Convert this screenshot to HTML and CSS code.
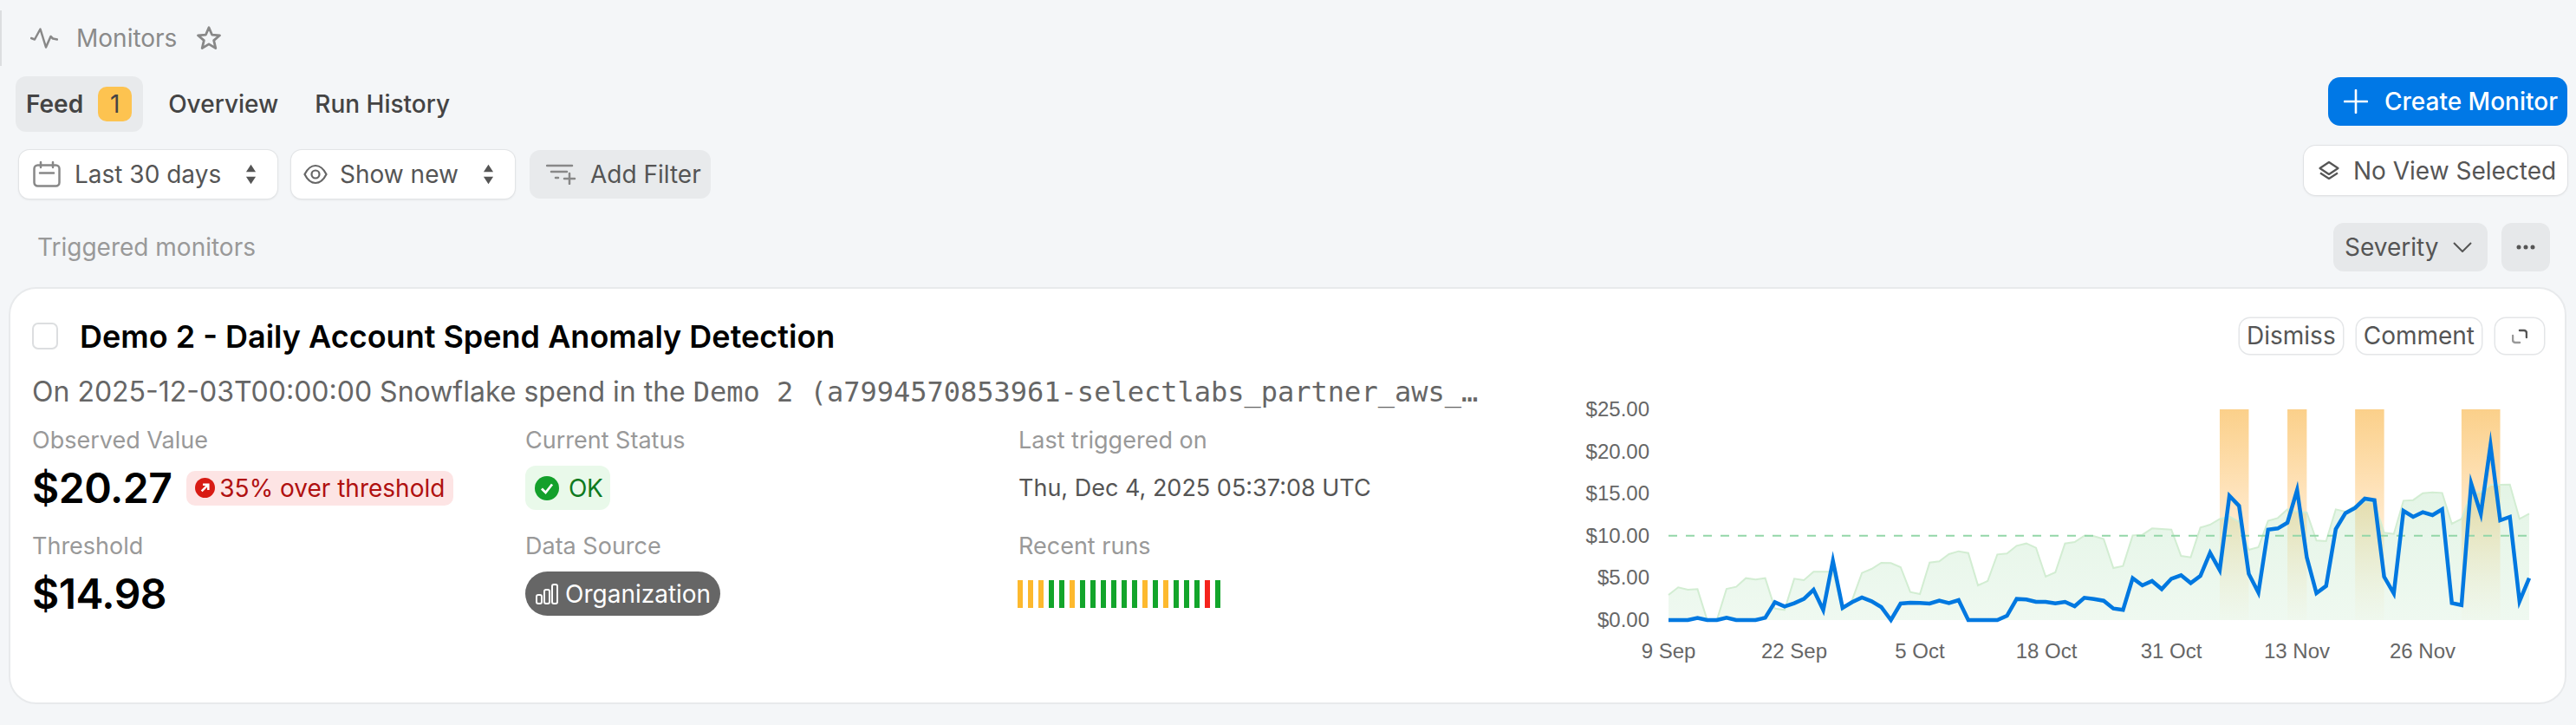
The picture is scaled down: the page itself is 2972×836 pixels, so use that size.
FILE: index.html
```html
<!DOCTYPE html>
<html lang="en">
<head>
<meta charset="utf-8">
<title>Monitors</title>
<link rel="stylesheet" href="styles.css">
</head>
<body>
<header class="page-head">
  <svg class="ic-activity" viewBox="0 0 32 24"><path d="M1 12 5 13.500 11.500 1.500 18 22.500 23.500 10 26 12.500 31 13.500"/></svg>
  <span class="page-title">Monitors</span>
  <svg class="ic-star" viewBox="0 0 28 28"><path d="M14 2.500 17.300 10.300 25.700 11 19.300 16.500 21.300 24.800 14 20.400 6.700 24.800 8.700 16.500 2.300 11 10.700 10.300Z"/></svg>
</header>

<section class="toolbar">
  <div class="toolbar-left">
    <nav class="tabs">
      <a class="tab tab-active"><span>Feed</span><span class="tab-badge">1</span></a>
      <a class="tab">Overview</a>
      <a class="tab">Run History</a>
    </nav>
    <div class="filters">
      <button class="select select-date">
        <svg class="ic-calendar" viewBox="0 0 32 30"><rect x="1.500" y="4.500" width="29" height="24" rx="4"/><path d="M9 1v6M23 1v6M8 13.500h16" /></svg>
        <span>Last 30 days</span>
        <svg class="ic-updown" viewBox="0 0 14 24"><path d="M7 0 13 9H1ZM7 24 1 15H13Z"/></svg>
      </button>
      <button class="select select-show">
        <svg class="ic-eye" viewBox="0 0 28 24"><path d="M1.500 12C5 5 9 2 14 2s9 3 12.500 10C23 19 19 22 14 22S5 19 1.500 12Z"/><circle cx="14" cy="12" r="4.500"/></svg>
        <span>Show new</span>
        <svg class="ic-updown" viewBox="0 0 14 24"><path d="M7 0 13 9H1ZM7 24 1 15H13Z"/></svg>
      </button>
      <button class="ghost-filter">
        <svg class="ic-filter" viewBox="0 0 36 24"><path d="M1 2h29M6 9h18M11 16h3M27 11v12M21 17h12"/></svg>
        <span>Add Filter</span>
      </button>
    </div>
  </div>
  <div class="toolbar-right">
    <button class="primary">
      <svg class="ic-plus" viewBox="0 0 28 28"><path d="M14 1v26M1 14h26"/></svg>
      <span>Create Monitor</span>
    </button>
    <button class="view-btn">
      <svg class="ic-layers" viewBox="0 0 24 24"><path d="M12 2 22.500 9 12 16 1.500 9ZM2 14.500 12 21 22 14.500"/></svg>
      <span>No View Selected</span>
    </button>
  </div>
</section>

<section class="list-head">
  <span class="list-title">Triggered monitors</span>
  <div class="list-actions">
    <button class="sort-btn"><span>Severity</span>
      <svg class="ic-chevron" viewBox="0 0 22 12"><path d="M1 1 11 11 21 1"/></svg>
    </button>
    <button class="more-btn"><svg class="ic-dots" viewBox="0 0 22 6"><circle cx="3" cy="3" r="2.500"/><circle cx="11" cy="3" r="2.500"/><circle cx="19" cy="3" r="2.500"/></svg></button>
  </div>
</section>

<article class="card">
  <div class="card-head">
    <span class="checkbox"></span>
    <h2 class="card-title">Demo 2 - Daily Account Spend Anomaly Detection</h2>
    <div class="card-actions">
      <button class="mini">Dismiss</button>
      <button class="mini">Comment</button>
      <button class="mini mini-icon"><svg class="ic-expand" viewBox="0 0 18 18"><path class="dark" d="M9 2h5a3 3 0 0 1 3 3v5"/><path class="light" d="M9 16H4a3 3 0 0 1-3-3V8"/></svg></button>
    </div>
  </div>
  <div class="card-body">
    <div class="details">
      <p class="desc">On 2025-12-03T00:00:00 Snowflake spend in the <code class="mono">Demo 2 (a7994570853961-selectlabs_partner_aws_…</code></p>
      <div class="facts">
        <div class="fact">
          <div class="label">Observed Value</div>
          <div class="value-row">
            <span class="big">$20.27</span>
            <span class="over">
              <svg class="ic-over" viewBox="0 0 24 24"><circle cx="12" cy="12" r="12"/><path d="M8 16 16 8M9.500 8H16V14.500"/></svg>
              35% over threshold
            </span>
          </div>
        </div>
        <div class="fact">
          <div class="label">Current Status</div>
          <div class="value-row">
            <span class="ok">
              <svg class="ic-ok" viewBox="0 0 28 28"><circle cx="14" cy="14" r="14"/><path d="M8 14.500 12.500 19 20 9.500"/></svg>
              OK
            </span>
          </div>
        </div>
        <div class="fact">
          <div class="label">Last triggered on</div>
          <div class="value-row"><span class="date">Thu, Dec 4, 2025 05:37:08 UTC</span></div>
        </div>
        <div class="fact">
          <div class="label">Threshold</div>
          <div class="value-row"><span class="big">$14.98</span></div>
        </div>
        <div class="fact">
          <div class="label">Data Source</div>
          <div class="value-row">
            <span class="org">
              <svg class="ic-org" viewBox="0 0 26 24"><rect x="1" y="13" width="6" height="10" rx="2"/><rect x="10" y="7" width="6" height="16" rx="2"/><rect x="19" y="1" width="6" height="22" rx="2"/></svg>
              Organization
            </span>
          </div>
        </div>
        <div class="fact">
          <div class="label">Recent runs</div>
          <div class="value-row runs">
            <i class="run warn"></i><i class="run warn"></i><i class="run warn"></i><i class="run good"></i><i class="run good"></i><i class="run warn"></i><i class="run good"></i><i class="run good"></i><i class="run good"></i><i class="run good"></i><i class="run good"></i><i class="run good"></i><i class="run warn"></i><i class="run good"></i><i class="run warn"></i><i class="run good"></i><i class="run good"></i><i class="run good"></i><i class="run bad"></i><i class="run good"></i>
          </div>
        </div>
      </div>
    </div>
    <svg class="chart" viewBox="0 0 1130 320" width="1130" height="320">
      <defs>
        <linearGradient id="bandFill" x1="0" y1="0" x2="0" y2="1">
          <stop offset="0" stop-color="#fbd08a"/>
          <stop offset="0.5" stop-color="#ffe8c8"/>
          <stop offset="1" stop-color="#fff4e2" stop-opacity="0.1"/>
        </linearGradient>
        <linearGradient id="areaFill" x1="0" y1="0" x2="0" y2="1">
          <stop offset="0" stop-color="#1aa82e" stop-opacity="0.12"/>
          <stop offset="1" stop-color="#1aa82e" stop-opacity="0.07"/>
        </linearGradient>
      </defs>
      <g class="axis-y">
        <text x="83" y="30">$25.00</text>
        <text x="83" y="79">$20.00</text>
        <text x="83" y="127">$15.00</text>
        <text x="83" y="176">$10.00</text>
        <text x="83" y="224">$5.00</text>
        <text x="83" y="273">$0.00</text>
      </g>
      <g class="axis-x">
        <text x="105" y="309">9 Sep</text>
        <text x="250" y="309">22 Sep</text>
        <text x="395" y="309">5 Oct</text>
        <text x="541" y="309">18 Oct</text>
        <text x="685" y="309">31 Oct</text>
        <text x="830" y="309">13 Nov</text>
        <text x="975" y="309">26 Nov</text>
      </g>
      <svg x="105" y="22" width="993" height="243" viewBox="0 0 89 729" preserveAspectRatio="none" class="plot">
        <rect class="band" x="57" y="0" width="3" height="729"/>
        <rect class="band" x="64" y="0" width="2" height="729"/>
        <rect class="band" x="71" y="0" width="3" height="729"/>
        <rect class="band" x="82" y="0" width="4" height="729"/>
        <polygon class="area" points="0,642 1,616 2,624 3,622 4,729 5,729 6,621 7,614 8,584 9,589 10,584 11,689 12,694 13,586 14,591 15,562 16,562 17,562 18,694 19,659 20,566 21,552 22,531 23,532 24,546 25,632 26,639 27,530 28,526 29,501 30,491 31,497 32,609 33,594 34,502 35,499 36,472 37,464 38,479 39,579 40,564 41,464 42,459 43,437 44,439 45,449 46,549 47,542 48,436 49,434 50,412 51,414 52,416 53,507 54,512 55,409 56,399 57,379 58,371 59,389 60,486 61,477 62,386 63,376 64,346 65,354 66,357 67,454 68,456 69,346 70,354 71,334 72,319 73,322 74,427 75,431 76,316 77,314 78,290 79,287 80,289 81,396 82,379 83,289 84,286 85,261 86,261 87,260 88,379 89,361 89,729 0,729"/>
        <polyline class="area-line" points="0,642 1,616 2,624 3,622 4,729 5,729 6,621 7,614 8,584 9,589 10,584 11,689 12,694 13,586 14,591 15,562 16,562 17,562 18,694 19,659 20,566 21,552 22,531 23,532 24,546 25,632 26,639 27,530 28,526 29,501 30,491 31,497 32,609 33,594 34,502 35,499 36,472 37,464 38,479 39,579 40,564 41,464 42,459 43,437 44,439 45,449 46,549 47,542 48,436 49,434 50,412 51,414 52,416 53,507 54,512 55,409 56,399 57,379 58,371 59,389 60,486 61,477 62,386 63,376 64,346 65,354 66,357 67,454 68,456 69,346 70,354 71,334 72,319 73,322 74,427 75,431 76,316 77,314 78,290 79,287 80,289 81,396 82,379 83,289 84,286 85,261 86,261 87,260 88,379 89,361"/>
        <line class="threshold" x1="0" y1="437" x2="89" y2="437"/>
        <polyline class="spend" points="0,729 1,729 2,729 3,722 4,729 5,729 6,721 7,729 8,729 9,729 10,721 11,667 12,682 13,671 14,656 15,624 16,694 17,524 18,687 19,667 20,651 21,664 22,684 23,729 24,672 25,669 26,670 27,672 28,662 29,670 30,660 31,729 32,729 33,729 34,729 35,714 36,656 37,658 38,666 39,666 40,671 41,666 42,681 43,652 44,656 45,662 46,689 47,694 48,584 49,609 50,594 51,622 52,586 53,574 54,601 55,576 56,496 57,556 58,299 59,334 60,569 61,634 62,416 63,412 64,392 65,279 66,512 67,636 68,611 69,414 70,359 71,341 72,309 73,314 74,579 75,637 76,351 77,372 78,356 79,366 80,346 81,670 82,677 83,256 84,362 85,124 86,384 87,372 88,664 89,584"/>
      </svg>
    </svg>
  </div>
</article>
</body>
</html>
```

FILE: styles.css
```css
* { box-sizing: border-box; }
html, body { margin: 0; padding: 0; }
body {
  width: 2972px;
  height: 836px;
  overflow: hidden;
  background: #f4f6f8;
  font-family: Inter, "Liberation Sans", sans-serif;
  font-size: 28px;
  color: #555;
}
button {
  font: inherit;
  color: inherit;
  border: 0;
  background: none;
  padding: 0;
  margin: 0;
}
svg { display: block; flex: none; }

/* page header */
.page-head {
  margin-top: 12px;
  height: 64px;
  border-left: 2px solid #dcdee0;
  display: flex;
  align-items: center;
  padding-left: 33px;
  margin-bottom: 12px;
  color: #8a8a8a;
}
.ic-activity { width: 32px; height: 24px; fill: none; stroke: #888; stroke-width: 2.5; stroke-linejoin: round; stroke-linecap: round; }
.page-title { margin-left: 21px; }
.ic-star { width: 30px; height: 30px; margin-left: 22px; fill: none; stroke: #888; stroke-width: 2.6; stroke-linejoin: round; }

/* toolbar */
.toolbar {
  display: flex;
  justify-content: space-between;
  padding: 0 10px 0 18px;
}
.tabs { display: flex; gap: 16px; height: 64px; }
.tab {
  display: flex;
  align-items: center;
  padding: 0 13px;
  border-radius: 12px;
  color: #444;
  font-weight: 500;
  white-space: pre;
}
.tab-active { background: #e8eaec; padding: 0 13px 0 12px; font-weight: 600; gap: 17px; }
.tab-badge {
  width: 39px;
  height: 40px;
  display: flex;
  align-items: center;
  justify-content: center;
  background: #fdc350;
  border-radius: 10px;
  font-weight: 400;
}
.filters { display: flex; margin: 21px 0 0 4px; gap: 16px; }
.select {
  display: flex;
  align-items: center;
  height: 56px;
  background: #fff;
  border-radius: 12px;
  box-shadow: 0 0 0 1px #e2e4e6, 0 1px 3px rgba(0,0,0,.12);
}
.select-date { width: 298px; padding: 0 24px 0 16px; gap: 16px; }
.select-show { width: 258px; padding: 0 24px 0 14px; gap: 14px; }
.select span { flex: 1; text-align: left; }
.ic-calendar { width: 32px; height: 30px; fill: none; stroke: #888; stroke-width: 2.5; stroke-linecap: round; }
.ic-updown { width: 13px; height: 24px; fill: #555; }
.ic-eye { width: 28px; height: 24px; fill: none; stroke: #666; stroke-width: 2.2; }
.ghost-filter {
  display: flex;
  align-items: center;
  gap: 15px;
  height: 56px;
  width: 209px;
  margin-left: 1px;
  padding-left: 19px;
  background: #e8eaec;
  border-radius: 12px;
}
.ic-filter { width: 36px; height: 24px; fill: none; stroke: #888; stroke-width: 2.5; stroke-linecap: round; }

.toolbar-right { display: flex; flex-direction: column; align-items: flex-end; padding-top: 1px; gap: 23px; }
.primary {
  display: flex;
  align-items: center;
  gap: 19px;
  height: 56px;
  width: 276px;
  padding-left: 18px;
  background: #0078e6;
  color: #fff;
  border-radius: 14px;
  font-weight: 500;
}
.ic-plus { width: 28px; height: 28px; fill: none; stroke: #fff; stroke-width: 2.6; stroke-linecap: round; }
.view-btn {
  display: flex;
  align-items: center;
  gap: 16px;
  height: 57px;
  width: 304px;
  padding-left: 17px;
  background: #fff;
  border-radius: 14px;
  box-shadow: 0 0 0 1px #e0e2e4, 0 1px 3px rgba(0,0,0,.1);
  white-space: nowrap;
}
.ic-layers { width: 24px; height: 24px; fill: none; stroke: #555; stroke-width: 2.2; stroke-linejoin: round; }

/* list header */
.list-head {
  display: flex;
  justify-content: space-between;
  align-items: center;
  margin-top: 28px;
  padding: 0 30px 0 43px;
  height: 56px;
}
.list-title { color: #999; }
.list-actions { display: flex; gap: 16px; }
.sort-btn {
  display: flex;
  align-items: center;
  justify-content: space-between;
  width: 178px;
  height: 56px;
  padding: 0 18px 0 13px;
  background: #e6e8ea;
  border-radius: 12px;
}
.ic-chevron { width: 22px; height: 12px; fill: none; stroke: #555; stroke-width: 2; }
.more-btn {
  display: flex;
  align-items: center;
  justify-content: center;
  width: 56px;
  height: 56px;
  background: #e6e8ea;
  border-radius: 12px;
}
.ic-dots { width: 22px; height: 6px; fill: #555; }

/* card */
.card {
  margin: 18px 11px 0 10px;
  height: 481px;
  background: #fff;
  border: 2px solid #e8eaec;
  border-radius: 32px;
  padding: 34px 24px 0 25px;
}
.card-head { display: flex; align-items: center; height: 41px; margin-bottom: 24px; }
.checkbox {
  width: 30px;
  height: 31px;
  border: 2px solid #dcdee0;
  border-radius: 7px;
  margin-right: 25px;
  background: #fff;
}
.card-title { margin: 0; flex: 1; font-size: 36px; font-weight: 600; color: #000; }
.card-actions { display: flex; gap: 16px; }
.mini {
  height: 41px;
  padding: 0 8px;
  background: #fff;
  border-radius: 12px;
  box-shadow: 0 0 0 1.500px #e4e6e8, 0 1px 2px rgba(0,0,0,.06);
  font-size: 28px;
  line-height: 41px;
  color: #555;
}
.mini-icon { width: 56px; display: flex; align-items: center; justify-content: center; }
.ic-expand { width: 18px; height: 18px; fill: none; stroke-width: 2.5; stroke-linecap: round; }
.ic-expand .dark { stroke: #555; }
.ic-expand .light { stroke: #999; }

.card-body { display: flex; }
.details { width: 1708px; flex: none; }
.desc {
  margin: 0 0 19px;
  height: 40px;
  line-height: 40px;
  font-size: 32px;
  color: #666;
  white-space: nowrap;
}
.mono { font-family: "DejaVu Sans Mono", "Liberation Mono", monospace; font-size: 32px; letter-spacing: 0; }
.facts { display: grid; grid-template-columns: repeat(3, 569px); row-gap: 25px; }
.label { height: 34px; line-height: 34px; font-size: 27px; color: #999; margin-bottom: 12px; }
.value-row { height: 51px; display: flex; align-items: center; }
.big { font-size: 48px; font-weight: 600; color: #000; letter-spacing: -0.5px; }
.over {
  display: flex;
  align-items: center;
  gap: 5px;
  margin-left: 17px;
  height: 40px;
  padding: 0 10px;
  background: #fde4e4;
  border-radius: 10px;
  color: #b01010;
}
.ic-over { width: 23px; height: 23px; }
.ic-over circle { fill: #d81b14; }
.ic-over path { fill: none; stroke: #fff; stroke-width: 2.6; }
.ok {
  display: flex;
  align-items: center;
  gap: 11px;
  height: 51px;
  padding: 0 9px 0 11px;
  background: #e9f9ea;
  border-radius: 12px;
  color: #0f7a1e;
  letter-spacing: -0.5px;
}
.ic-ok { width: 28px; height: 28px; }
.ic-ok circle { fill: #13a02b; }
.ic-ok path { fill: none; stroke: #fff; stroke-width: 2.8; }
.date { color: #555; font-size: 27px; }
.org {
  display: flex;
  align-items: center;
  gap: 8px;
  height: 51px;
  padding: 0 11px 0 12px;
  background: #666;
  color: #fff;
  border-radius: 26px;
}
.ic-org { width: 26px; height: 24px; fill: none; stroke: #fff; stroke-width: 2; }
.runs { gap: 6px; margin-left: -1px; }
.run { width: 6px; height: 32px; display: block; }
.warn { background: #fdb92e; }
.good { background: #13a52b; }
.bad { background: #f5231c; }

/* chart */
.chart { margin: 18px 0 0 75px; overflow: visible; font-family: "Liberation Sans", Arial, sans-serif; }
.axis-y text { font-size: 24px; fill: #666; text-anchor: end; }
.axis-x text { font-size: 24px; fill: #666; text-anchor: middle; }
.plot { overflow: visible; }
.band { fill: url(#bandFill); }
.area { fill: url(#areaFill); }
.area-line { fill: none; stroke: #d2edd2; stroke-width: 2; vector-effect: non-scaling-stroke; }
.threshold { stroke: #93d6a8; stroke-width: 2; stroke-dasharray: 10 10; vector-effect: non-scaling-stroke; }
.spend { fill: none; stroke: #0078e0; stroke-width: 4.5; stroke-linejoin: miter; stroke-miterlimit: 10; vector-effect: non-scaling-stroke; }
```
